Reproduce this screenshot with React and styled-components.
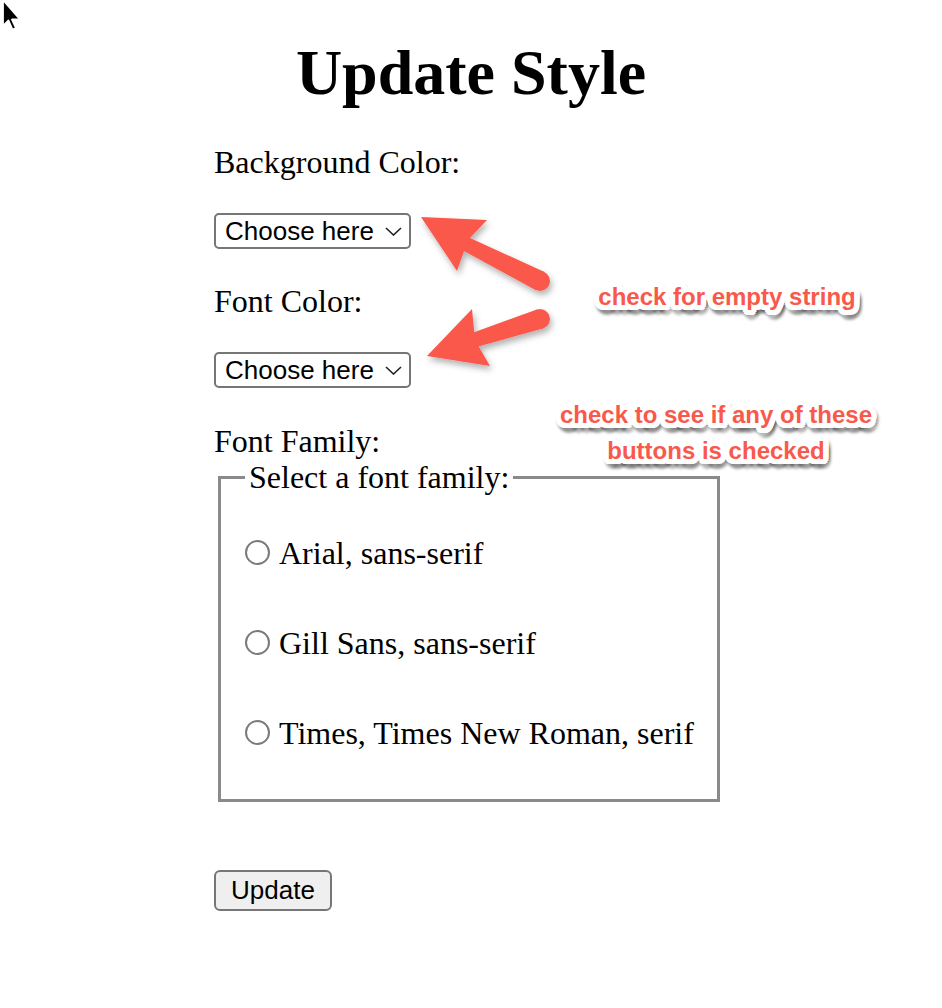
import React from "react";
import styled, { createGlobalStyle } from "styled-components";

const GlobalStyle = createGlobalStyle`
  html, body {
    margin: 0;
    padding: 0;
    background: #fff;
  }
  body {
    font-family: "Liberation Serif", "Times New Roman", serif;
    color: #000;
  }
`;

// skitch-style white outline + soft drop shadow round the note text
const ring = (r, color, n, dx = 0, dy = 0, blur = 0) =>
  Array.from({ length: n }, (_, i) => {
    const a = (i / n) * Math.PI * 2;
    return `${(Math.cos(a) * r + dx).toFixed(1)}px ${(Math.sin(a) * r + dy).toFixed(1)}px ${blur}px ${color}`;
  });

const noteShadow = [
  ...ring(2, "#fff", 8),
  ...ring(4, "#fff", 12),
  ...ring(5.5, "#fff", 18),
  ...ring(5.5, "rgba(0,0,0,0.25)", 12, 2, 4, 3),
].join(", ");

const RED = "#f9594b";

function App() {
  return (
    <Page>
      <GlobalStyle />
      <Form onSubmit={e => e.preventDefault()}>
        <Heading>Update Style</Heading>

        <Label top={35}>Background Color:</Label>
        <ChooseSelect gap={33} />

        <Label top={34}>Font Color:</Label>
        <ChooseSelect gap={33} />

        <Label top={35}>Font Family:</Label>
        <FontBox>
          <Legend>Select a font family:</Legend>
          <RadioList>
            <RadioRow>
              <Radio type="radio" name="font" value="arial" />
              Arial, sans-serif
            </RadioRow>
            <RadioRow>
              <Radio type="radio" name="font" value="gill" />
              Gill Sans, sans-serif
            </RadioRow>
            <RadioRow>
              <Radio type="radio" name="font" value="times" />
              Times, Times New Roman, serif
            </RadioRow>
          </RadioList>
        </FontBox>

        <UpdateButton type="submit">Update</UpdateButton>
      </Form>

      <Arrows />
      <Note center={727} top={279}>check for empty string</Note>
      <Note center={716} top={397}>
        check to see if any of these
        <br />
        buttons is checked
      </Note>
      <Cursor />
    </Page>
  );
}

export default App;

function ChooseSelect({ gap }) {
  return (
    <SelectWrap gap={gap}>
      <Select defaultValue="">
        <option value="">Choose here</option>
        <option value="red">Red</option>
        <option value="blue">Blue</option>
      </Select>
      <Chevron width="17" height="9" viewBox="0 0 17 9">
        <path d="M1 1 L8.5 8 L16 1" fill="none" stroke="#222" strokeWidth="1.6" />
      </Chevron>
    </SelectWrap>
  );
}

// tapered shaft + head, like a skitch arrow
function arrowShapes(tip, b1, notch, b2, head, tail, wHead, wTail) {
  const dx = tail[0] - head[0];
  const dy = tail[1] - head[1];
  const len = Math.hypot(dx, dy);
  const nx = -dy / len;
  const ny = dx / len;
  const shaft = [
    [head[0] + nx * wHead, head[1] + ny * wHead],
    [tail[0] + nx * wTail, tail[1] + ny * wTail],
    [tail[0] - nx * wTail, tail[1] - ny * wTail],
    [head[0] - nx * wHead, head[1] - ny * wHead],
  ];
  return {
    shaft: shaft.map(p => p.join(",")).join(" "),
    head: [tip, b1, notch, b2].map(p => p.join(",")).join(" "),
    tail,
    r: wTail,
  };
}

function Arrows() {
  const list = [
    arrowShapes([421, 217], [487, 220], [468, 240], [457, 271], [462, 242], [540, 281], 7, 10),
    arrowShapes([427, 356], [472, 309], [475, 340], [490, 366], [468, 342], [540, 319], 7, 10),
  ];
  return (
    <Overlay width="942" height="1008" viewBox="0 0 942 1008">
      <defs>
        <filter id="drop" x="-20%" y="-20%" width="140%" height="140%">
          <feDropShadow dx="2" dy="4" stdDeviation="3" floodColor="#000" floodOpacity="0.3" />
        </filter>
      </defs>
      {list.map((a, i) => (
        <g key={i} fill={RED} filter="url(#drop)">
          <polygon points={a.shaft} />
          <circle cx={a.tail[0]} cy={a.tail[1]} r={a.r} />
          <polygon points={a.head} />
        </g>
      ))}
    </Overlay>
  );
}

function Cursor() {
  return (
    <CursorIcon width="26" height="36" viewBox="0 0 26 36">
      <path
        d="M3 0 L3 26 L8.5 20.5 L12.5 29.5 L16 28 L12 19.5 L20 19.5 Z"
        fill="#000"
        stroke="#fff"
        strokeWidth="1.8"
        strokeLinejoin="round"
      />
    </CursorIcon>
  );
}

const Page = styled.div`
  position: relative;
  width: 942px;
  min-height: 1008px;
  overflow: hidden;
`;

const Form = styled.form`
  width: 510px;
  margin-left: 214px;
  padding-top: 37px;
  display: flex;
  flex-direction: column;
  align-items: flex-start;
`;

const Heading = styled.h1`
  align-self: stretch;
  margin: 0;
  font-size: 64px;
  line-height: 72px;
  font-weight: bold;
  text-align: center;
  padding-left: 4px;
`;

const Label = styled.div`
  margin-top: ${p => p.top}px;
  font-size: 32px;
  line-height: 36px;
`;

const SelectWrap = styled.div`
  position: relative;
  margin-top: ${p => p.gap}px;
  display: inline-flex;
`;

const Select = styled.select`
  appearance: none;
  -webkit-appearance: none;
  width: 197px;
  height: 36px;
  margin: 0;
  padding: 0 30px 0 9px;
  font-family: "Liberation Sans", Arial, sans-serif;
  font-size: 26px;
  color: #000;
  background: #fff;
  border: 2px solid #767676;
  border-radius: 5px;
`;

const Chevron = styled.svg`
  position: absolute;
  right: 9px;
  top: 14px;
  pointer-events: none;
`;

const FontBox = styled.fieldset`
  align-self: stretch;
  margin: 0 4px;
  padding: 0 24px 48px;
  border: 3px solid #8a8a8a;
  min-width: 0;
`;

const Legend = styled.legend`
  padding: 0 4px;
  font-size: 32px;
  line-height: 36px;
`;

const RadioList = styled.div`
  display: flex;
  flex-direction: column;
  gap: 54px;
  padding-top: 40px;
`;

const RadioRow = styled.label`
  display: flex;
  align-items: center;
  font-size: 32px;
  line-height: 36px;
  white-space: nowrap;
`;

const Radio = styled.input`
  appearance: none;
  -webkit-appearance: none;
  width: 25px;
  height: 25px;
  margin: 0 9px 2px 0;
  border: 2px solid #7a7a7a;
  border-radius: 50%;
  background: #fff;
  flex-shrink: 0;
  &:checked {
    background: radial-gradient(circle, #0a64d8 0 5px, #fff 6px);
  }
`;

const UpdateButton = styled.button`
  margin-top: 68px;
  height: 41px;
  padding: 0 15px;
  font-family: "Liberation Sans", Arial, sans-serif;
  font-size: 26px;
  color: #000;
  background: #efefef;
  border: 2px solid #767676;
  border-radius: 6px;
`;

const Overlay = styled.svg`
  position: absolute;
  left: 0;
  top: 0;
  pointer-events: none;
`;

const Note = styled.div`
  position: absolute;
  top: ${p => p.top}px;
  left: ${p => p.center}px;
  transform: translateX(-50%);
  white-space: nowrap;
  text-align: center;
  font-family: "Liberation Sans", Arial, sans-serif;
  font-weight: bold;
  font-size: 24px;
  line-height: 36px;
  color: ${RED};
  text-shadow: ${noteShadow};
  pointer-events: none;
`;

const CursorIcon = styled.svg`
  position: absolute;
  left: 0;
  top: 0;
`;
